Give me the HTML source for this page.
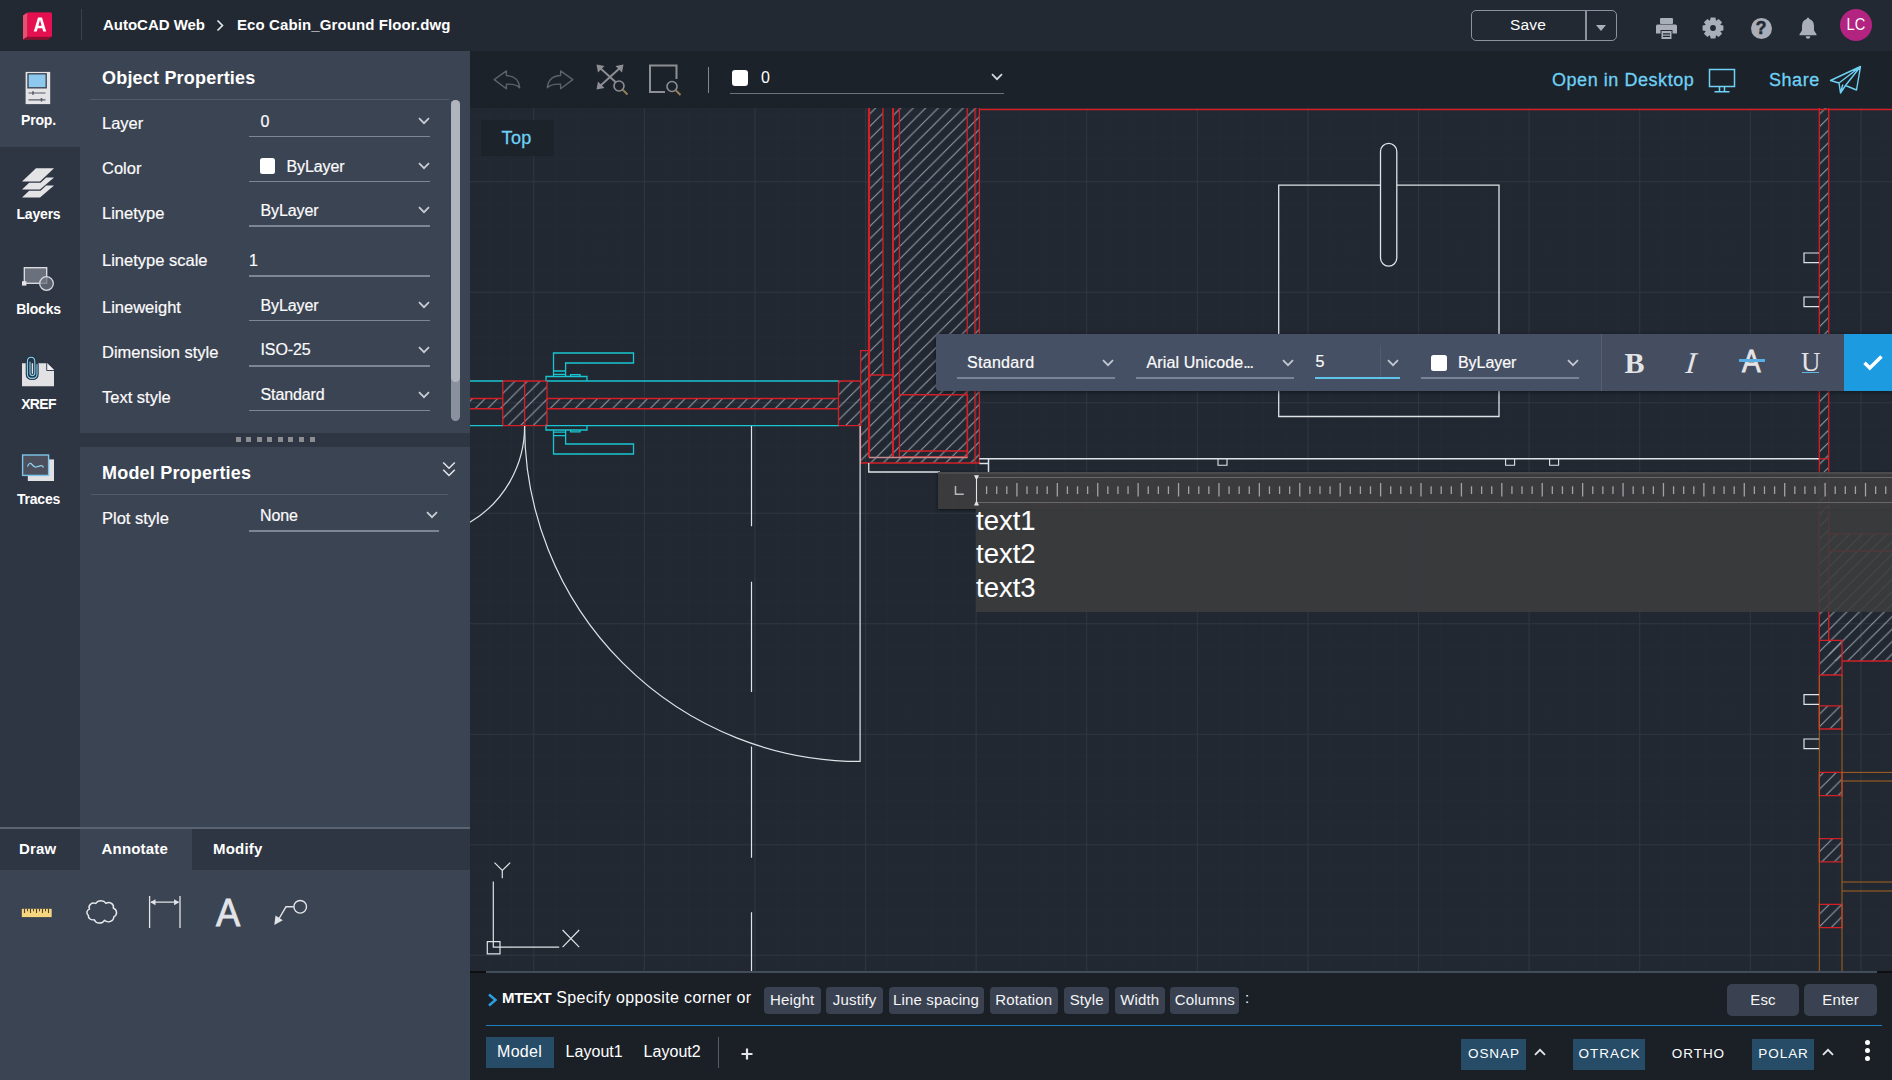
<!DOCTYPE html>
<html><head><meta charset="utf-8">
<style>
*{box-sizing:border-box;margin:0;padding:0}
html,body{width:1892px;height:1080px;overflow:hidden;background:#1b2027;font-family:"Liberation Sans",sans-serif;color:#fff}
.abs{position:absolute}
#topbar{left:0;top:0;width:1892px;height:51px;background:#222933}
#rail{left:0;top:52px;width:80px;height:776px;background:#2e3543;box-shadow:0 -1px 0 #3b4453}
#panel{left:80px;top:52px;width:390px;height:776px;background:#3b4453;box-shadow:0 -1px 0 #3b4453}
#ctool{left:470px;top:52px;width:1422px;height:56px;background:#1c2229;box-shadow:0 -1px 0 #1c2229}
#cmd{left:470px;top:972px;width:1422px;height:108px;background:#1b2027}
#tabs{left:0;top:827px;width:470px;height:253px;background:#3b4453}
.lbl{position:absolute;font-size:16.5px;letter-spacing:0;-webkit-text-stroke:.2px #fbfbfc;color:#fbfbfc;white-space:nowrap;line-height:1}
.val{position:absolute;font-size:16px;letter-spacing:-.1px;-webkit-text-stroke:.2px #fbfbfc;color:#fbfbfc;white-space:nowrap;line-height:1}
.ul{position:absolute;height:1.7px;background:#7d8696}
.chev{position:absolute;width:11px;height:7px}
.rl{position:absolute;left:0;width:77px;text-align:center;font-size:14px;font-weight:bold;letter-spacing:-.2px;color:#fff;line-height:1}
.h{position:absolute;font-size:18px;font-weight:bold;letter-spacing:.2px;color:#fff;line-height:1;white-space:nowrap}
.cb{position:absolute;top:15px;height:26.500px;border-radius:4px;background:#3a4251;font-size:15px;line-height:26.500px;text-align:center;letter-spacing:.15px;white-space:nowrap;color:#f4f5f7}
.sb{position:absolute;top:66.500px;height:31.500px;background:#264c67;font-size:13.500px;line-height:30px;text-align:center;letter-spacing:.95px;text-indent:.9px;white-space:nowrap;color:#fff}
</style></head><body>
<svg class="abs" style="left:470px;top:108px" width="1422" height="864" viewBox="470 108 1422 864" shape-rendering="auto">
<defs>
<pattern id="gmin" x="533.25" y="181.25" width="22.119999999999997" height="22.1" patternUnits="userSpaceOnUse"><path d="M0.5 0V22.1M0 0.5H22.119999999999997" stroke="#232a34" stroke-width="1" fill="none" shape-rendering="crispEdges"/></pattern>
<pattern id="gmaj" x="533.25" y="181.25" width="110.6" height="110.5" patternUnits="userSpaceOnUse"><path d="M0.5 0V110.5M0 0.5H110.6" stroke="#2e3641" stroke-width="1" fill="none" shape-rendering="crispEdges"/></pattern>
<pattern id="hat" x="8.7" y="0" width="12.5" height="12.5" patternUnits="userSpaceOnUse"><path d="M-1 13.5L13.5 -1M-1 1L1 -1M11.5 13.5L13.5 11.5" stroke="#9aa2ad" stroke-width="1" fill="none"/></pattern>
</defs>
<rect x="470" y="108" width="1422" height="864" fill="#212832"/>
<rect x="470" y="108" width="1422" height="864" fill="url(#gmin)"/>
<rect x="470" y="108" width="1422" height="864" fill="url(#gmaj)"/>
<rect x="470" y="398.5" width="32.75" height="10.25" fill="url(#hat)"/>
<rect x="502.75" y="381" width="44.25" height="44.60000000000002" fill="url(#hat)"/>
<rect x="547" y="398.5" width="291.5" height="10.25" fill="url(#hat)"/>
<rect x="838.5" y="381" width="22.100000000000023" height="44.60000000000002" fill="url(#hat)"/>
<rect x="860.6" y="350.6" width="7.399999999999977" height="112.39999999999998" fill="url(#hat)"/>
<rect x="868" y="108" width="15" height="355" fill="url(#hat)"/>
<rect x="883" y="375" width="10" height="88" fill="url(#hat)"/>
<rect x="893" y="108" width="86.39999999999998" height="355" fill="url(#hat)"/>
<rect x="1819.3" y="108" width="9.400000000000091" height="532" fill="url(#hat)"/>
<rect x="1828.7" y="533.8" width="63.299999999999955" height="127.20000000000005" fill="url(#hat)"/>
<rect x="1819.3" y="640.4" width="22.700000000000045" height="34.60000000000002" fill="url(#hat)"/>
<rect x="1819.3" y="705.8" width="22.700000000000045" height="23.200000000000045" fill="url(#hat)"/>
<rect x="1819.3" y="772.4" width="22.700000000000045" height="23.200000000000045" fill="url(#hat)"/>
<rect x="1819.3" y="838.7" width="22.700000000000045" height="23.200000000000045" fill="url(#hat)"/>
<rect x="1819.3" y="904.4" width="22.700000000000045" height="23.200000000000045" fill="url(#hat)"/>
<path d="M470 398.5H502.75M470 408.75H502.75M547 398.5H838.5M547 408.75H838.5" stroke="#d41f26" stroke-width="1.3" fill="none" />
<path d="M502.75 381H547V425.6H502.75ZM524.6 381V425.6" stroke="#d41f26" stroke-width="1.3" fill="none" />
<path d="M838.5 381H860.6V425.6H838.5Z" stroke="#d41f26" stroke-width="1.3" fill="none" />
<path d="M868 350.6H860.6V463H979.4V108" stroke="#d41f26" stroke-width="1.3" fill="none" />
<path d="M869 108V457.5" stroke="#d41f26" stroke-width="2.2" fill="none" />
<path d="M883 108V375H869M883 375H893.5" stroke="#d41f26" stroke-width="1.3" fill="none" />
<path d="M893 108V457.5" stroke="#d41f26" stroke-width="2" fill="none" />
<path d="M899.4 108V457" stroke="#d41f26" stroke-width="1.3" fill="none" />
<path d="M899.4 394.75H967.5V457H899.4M899.4 451H967.5" stroke="#d41f26" stroke-width="1.3" fill="none" />
<path d="M975 108V463M967.2 108V457" stroke="#d41f26" stroke-width="1.3" fill="none" />
<path d="M869 457.5H967.5" stroke="#c98a8e" stroke-width="1.6" fill="none" />
<path d="M979.4 109.5H1892" stroke="#d41f26" stroke-width="1.3" fill="none" />
<path d="M1819.3 108V729M1828.7 108V640.4" stroke="#d41f26" stroke-width="1.3" fill="none" />
<path d="M1819.3 458.75H1828.7" stroke="#d41f26" stroke-width="1.3" fill="none" />
<path d="M1828.7 533.8H1892M1828.7 551H1892" stroke="#d41f26" stroke-width="1.3" fill="none" />
<path d="M1819.3 640.4H1842V675H1819.3M1842 661H1892" stroke="#d41f26" stroke-width="1.3" fill="none" />
<path d="M1819.3 705.8H1842V729.0H1819.3Z" stroke="#d41f26" stroke-width="1.3" fill="none" />
<path d="M1819.3 772.4H1842V795.6H1819.3Z" stroke="#d41f26" stroke-width="1.3" fill="none" />
<path d="M1819.3 838.7H1842V861.9000000000001H1819.3Z" stroke="#d41f26" stroke-width="1.3" fill="none" />
<path d="M1819.3 904.4H1842V927.6H1819.3Z" stroke="#d41f26" stroke-width="1.3" fill="none" />
<path d="M1819.3 675V972M1842 675V972" stroke="#a8621f" stroke-width="1" fill="none" />
<path d="M1842 772.4H1892M1842 781H1892M1842 882H1892M1842 891H1892" stroke="#a8621f" stroke-width="1" fill="none" />
<path d="M470 381H502.75M470 425.6H502.75M547 381H838.5M547 425.6H838.5" stroke="#19c5d2" stroke-width="1.4" fill="none" />
<path d="M553.5 376.5V353H633.5V363H565.6V376.5M553.5 371H565.6M553.5 374.4H565.6" stroke="#19c5d2" stroke-width="1.3" fill="none" />
<path d="M546 381V376.5H587V381M570.6 376.5V374.7H580V376.5" stroke="#19c5d2" stroke-width="1.3" fill="none" />
<path d="M553.5 430V454H633.5V444H565.6V430M553.5 435.6H565.6M553.5 432.2H565.6" stroke="#19c5d2" stroke-width="1.3" fill="none" />
<path d="M546 425.6V430H587V425.6M570.6 430V431.8H580V430" stroke="#19c5d2" stroke-width="1.3" fill="none" />
<path d="M524.6 426A335.5 335.5 0 0 0 860.1 761.4V426" stroke="#dfe3e8" stroke-width="1.2" fill="none" />
<path d="M524.6 426A111.7 111.7 0 0 1 470 522.3" stroke="#dfe3e8" stroke-width="1.2" fill="none" />
<path d="M751.5 426V526.2M751.5 581.7V692M751.5 746.4V857.8M751.5 912.2V972" stroke="#dfe3e8" stroke-width="1.2" fill="none" />
<path d="M868.75 463V472H940" stroke="#dfe3e8" stroke-width="1.3" fill="none" />
<path d="M979.4 458.75H1818.8M979.4 463.5H988.5M988.5 458.75V472" stroke="#dfe3e8" stroke-width="1.5" fill="none" />
<path d="M1278.7 185.2H1499V416.5H1278.7Z" stroke="#dfe3e8" stroke-width="1.3" fill="none" />
<rect x="1380.5" y="143.4" width="16.3" height="122.8" rx="8.15" fill="#212832" stroke="#dfe3e8" stroke-width="1.3"/>
<path d="M1218 458.75V465.2H1227V458.75" stroke="#dfe3e8" stroke-width="1.1" fill="none" />
<path d="M1505.6 458.75V465.2H1514.6V458.75" stroke="#dfe3e8" stroke-width="1.1" fill="none" />
<path d="M1549.6 458.75V465.2H1558.6V458.75" stroke="#dfe3e8" stroke-width="1.1" fill="none" />
<path d="M1819 253H1804V262.7H1819" stroke="#dfe3e8" stroke-width="1.2" fill="none" />
<path d="M1819 297H1804V306.7H1819" stroke="#dfe3e8" stroke-width="1.2" fill="none" />
<path d="M1819 694.7H1804V704.4000000000001H1819" stroke="#dfe3e8" stroke-width="1.2" fill="none" />
<path d="M1819 739H1804V748.7H1819" stroke="#dfe3e8" stroke-width="1.2" fill="none" />
<path d="M493.3 881.6V947.2H559.2" stroke="#dfe3e8" stroke-width="1.2" fill="none" />
<path d="M487.3 941.6H500V953.9H487.3Z" stroke="#dfe3e8" stroke-width="1.2" fill="none" />
<path d="M494.5 862.6L502.3 870.5L510.2 862.6M502.3 870.5V878.3" stroke="#dfe3e8" stroke-width="1.2" fill="none" />
<path d="M562.6 930L579.2 947.2M579.2 930L562.6 947.2" stroke="#dfe3e8" stroke-width="1.2" fill="none" />
</svg>
<div id="topbar" class="abs">
 <!-- logo -->
 <svg class="abs" style="left:21px;top:10px" width="34" height="32" viewBox="0 0 34 32">
  <path d="M2 5.5L6.5 2.5H30.5V26.5L27 29.5H2Z" fill="#a5123a"/>
  <path d="M2 5.5L6.5 2.5V27L2 29.5Z" fill="#e8506f"/>
  <path d="M6.5 26.5H30.5L27.5 29.5H2Z" fill="#8c0f30"/>
  <rect x="6.500" y="2.500" width="24.500" height="24.300" rx="1.500" fill="#e51050"/>
  <path d="M12.800 21.500L17 7.500H21L25.200 21.500H22.200L21.300 18.300H16.700L15.800 21.500ZM17.400 15.800H20.600L19 10Z" fill="#fff"/>
 </svg>
 <div class="abs" style="left:81px;top:9px;width:1px;height:31px;background:#3a4250"></div>
 <div class="abs" style="left:103px;top:16px;font-size:15px;font-weight:bold;letter-spacing:-.02px;line-height:18px;white-space:nowrap">AutoCAD Web</div>
 <svg class="abs" style="left:216px;top:19px" width="8" height="13" viewBox="0 0 8 13"><path d="M1.5 1.5L6.5 6.5L1.5 11.5" stroke="#e8eaee" stroke-width="1.6" fill="none"/></svg>
 <div class="abs" style="left:237px;top:16px;font-size:15px;font-weight:bold;letter-spacing:.1px;line-height:18px;white-space:nowrap">Eco Cabin_Ground Floor.dwg</div>
 <!-- save -->
 <div class="abs" style="left:1471px;top:10px;width:146px;height:31px;border:1.5px solid #8b93a1;border-radius:5px"></div>
 <div class="abs" style="left:1585px;top:11px;width:1.5px;height:29px;background:#8b93a1"></div>
 <div class="abs" style="left:1471px;top:16px;width:114px;text-align:center;font-size:15.5px;letter-spacing:.2px;line-height:18px">Save</div>
 <svg class="abs" style="left:1596px;top:25px" width="10" height="6" viewBox="0 0 10 6"><path d="M0 0H10L5 6Z" fill="#aab0bb"/></svg>
 <!-- printer -->
 <svg class="abs" style="left:1655px;top:17px" width="23" height="23" viewBox="0 0 23 23" fill="#a9aeb9">
  <rect x="5" y="1" width="13" height="6" rx="1"/>
  <path d="M2.5 7.5H20.5Q22 7.5 22 9V16.5H17.5V13H5.5V16.5H1V9Q1 7.5 2.5 7.5Z"/>
  <path d="M6.5 14H16.5V22H6.5Z M8 16.2H15V17.4H8ZM8 18.8H15V20H8Z" fill-rule="evenodd"/>
 </svg>
 <!-- gear -->
 <svg class="abs" style="left:1702px;top:17px" width="22" height="22" viewBox="-11 -11 22 22">
  <g fill="#a9aeb9"><circle r="7.700"/>
  <path d="M-2.400 -10.400H2.400L3.300 -6H-3.300Z"/><path d="M-2.400 -10.400H2.400L3.300 -6H-3.300Z" transform="rotate(45)"/><path d="M-2.400 -10.400H2.400L3.300 -6H-3.300Z" transform="rotate(90)"/><path d="M-2.400 -10.400H2.400L3.300 -6H-3.300Z" transform="rotate(135)"/><path d="M-2.400 -10.400H2.400L3.300 -6H-3.300Z" transform="rotate(180)"/><path d="M-2.400 -10.400H2.400L3.300 -6H-3.300Z" transform="rotate(225)"/><path d="M-2.400 -10.400H2.400L3.300 -6H-3.300Z" transform="rotate(270)"/><path d="M-2.400 -10.400H2.400L3.300 -6H-3.300Z" transform="rotate(315)"/></g>
  <circle r="2.900" fill="#222933"/>
 </svg>
 <!-- help -->
 <div class="abs" style="left:1750.500px;top:17.500px;width:21px;height:21px;border-radius:10.500px;background:#a9aeb9;color:#222933;font-weight:bold;font-size:17.500px;line-height:21.500px;text-align:center;-webkit-text-stroke:.5px #222933">?</div>
 <!-- bell -->
 <svg class="abs" style="left:1798px;top:16px" width="20" height="24" viewBox="0 0 20 24" fill="#a9aeb9">
  <path d="M10 1.5Q11.3 1.5 11.3 3Q16 4.3 16 10V14.5L18.5 18.3V19.3H1.5V18.3L4 14.5V10Q4 4.3 8.7 3Q8.7 1.5 10 1.5Z"/>
  <path d="M7.7 20.3H12.3Q12.3 22.8 10 22.8Q7.7 22.8 7.7 20.3Z"/>
 </svg>
 <!-- avatar -->
 <div class="abs" style="left:1839.5px;top:9px;width:32px;height:32px;border-radius:16px;background:#b32380;font-size:17px;line-height:32.500px;text-align:center;letter-spacing:0"><span style="display:inline-block;transform:scaleX(.86)">LC</span></div>
</div>

<div id="rail" class="abs">
 <div class="abs" style="left:0;top:0;width:80px;height:94.5px;background:#3b4453"></div>
 <!-- prop icon -->
 <svg class="abs" style="left:25px;top:19px" width="26" height="34" viewBox="0 0 26 34">
  <rect x=".6" y=".9" width="24.6" height="32.2" fill="#e4e4e6"/>
  <rect x="3" y="2.8" width="18.2" height="14" fill="#8dc8ee" stroke="#3e4654" stroke-width="1.4"/>
  <path d="M3.5 22H20.5M3.5 28.8H20.5" stroke="#555b66" stroke-width="1.2"/>
  <path d="M8 20.2V23.8M16.5 27V30.6" stroke="#555b66" stroke-width="1.6"/>
 </svg>
 <div class="rl" style="top:60.5px">Prop.</div>
 <!-- layers -->
 <svg class="abs" style="left:21px;top:115px" width="34" height="32" viewBox="0 0 34 32" fill="#e4e4e6">
  <path d="M1 14.6L15 1.2H33L19 14.6Z"/>
  <path d="M1 22.6L8.2 15.8H19.6L25.2 10.4H33L19 22.6Z"/>
  <path d="M1 30.6L8.2 23.8H19.6L25.2 18.4H33L19 30.6Z"/>
 </svg>
 <div class="rl" style="top:155px">Layers</div>
 <!-- blocks -->
 <svg class="abs" style="left:20px;top:213px" width="36" height="28" viewBox="0 0 36 28">
  <rect x="4.3" y="2.7" width="22.4" height="15.6" fill="#6b707d" stroke="#e0e2e6" stroke-width="1.3"/>
  <circle cx="26.5" cy="18.5" r="6.8" fill="#6b707d" fill-opacity=".75" stroke="#d6d8dc" stroke-width="1.3"/>
  <rect x="2" y="16.2" width="4.4" height="4.4" fill="#e4e4e6"/>
 </svg>
 <div class="rl" style="top:249.5px">Blocks</div>
 <!-- xref -->
 <svg class="abs" style="left:21px;top:304px" width="34" height="32" viewBox="0 0 34 32">
  <path d="M1 7.200H26.200L33 14V30.200H1Z" fill="#e2e2e4"/>
  <path d="M26.200 7.200V14H33Z" fill="#f1f1f3"/>
  <path d="M25.700 7.200V14.500H33" fill="none" stroke="#3a4150" stroke-width="1"/>
  <path d="M9 6V17Q9 19.600 11.400 19.600Q13.800 19.600 13.800 17V5.500Q13.800 1.200 10.100 1.200Q6.400 1.200 6.400 5.500V18Q6.400 22.400 11.200 22.400Q16 22.400 16 18V8.500" fill="none" stroke="#1f3646" stroke-width="3.400" stroke-linecap="round"/>
  <path d="M9 6V17Q9 19.600 11.400 19.600Q13.800 19.600 13.800 17V5.500Q13.800 1.200 10.100 1.200Q6.400 1.200 6.400 5.500V18Q6.400 22.400 11.200 22.400Q16 22.400 16 18V8.500" fill="none" stroke="#8fd0ec" stroke-width="1.100" stroke-linecap="round"/>
 </svg>
 <div class="rl" style="top:344.5px;letter-spacing:-.7px">XREF</div>
 <!-- traces -->
 <svg class="abs" style="left:21px;top:401px" width="34" height="30" viewBox="0 0 34 30">
  <rect x="6.8" y="6.4" width="26.2" height="21.6" fill="#e2e2e4"/>
  <rect x="1.6" y="2" width="26" height="20.4" fill="#4b505c" stroke="#7cc4ec" stroke-width="1.4"/>
  <path d="M6.5 13.5Q8.5 8.5 11 11.5T15 14T19 12.8T22.5 14.5" fill="none" stroke="#8fd0f2" stroke-width="1.3"/>
 </svg>
 <div class="rl" style="top:439.5px">Traces</div>
</div>

<div id="panel" class="abs">
<div class="h" style="left:22px;top:17px">Object Properties</div>
<div class="abs" style="left:10px;top:47px;width:359px;height:1px;background:#525b6b"></div>
<div class="abs" style="left:371px;top:48px;width:9px;height:321px;border-radius:4.5px;background:#8a909d"></div>
<div class="abs" style="left:371px;top:48px;width:9px;height:282px;border-radius:4.5px;background:#b0b4bd"></div>
<div class="lbl" style="left:22px;top:62.9px">Layer</div>
<div class="val" style="left:180.5px;top:61.8px">0</div>
<div class="ul" style="left:169px;top:83.6px;width:181px"></div>
<svg class="abs" style="left:337.5px;top:65.39999999999999px" width="12" height="8" viewBox="0 0 12 8"><path d="M1 1.2L6 6.2L11 1.2" stroke="#c9ced6" stroke-width="1.7" fill="none"/></svg>
<div class="lbl" style="left:22px;top:108.3px">Color</div>
<div class="abs" style="left:179.5px;top:106.3px;width:15.5px;height:15.5px;border-radius:2.5px;background:#fff"></div>
<div class="val" style="left:206.5px;top:106.5px">ByLayer</div>
<div class="ul" style="left:169px;top:128.6px;width:181px"></div>
<svg class="abs" style="left:337.5px;top:109.6px" width="12" height="8" viewBox="0 0 12 8"><path d="M1 1.2L6 6.2L11 1.2" stroke="#c9ced6" stroke-width="1.7" fill="none"/></svg>
<div class="lbl" style="left:22px;top:152.6px">Linetype</div>
<div class="val" style="left:180.5px;top:151.4px">ByLayer</div>
<div class="ul" style="left:169px;top:173.0px;width:181px"></div>
<svg class="abs" style="left:337.5px;top:154.4px" width="12" height="8" viewBox="0 0 12 8"><path d="M1 1.2L6 6.2L11 1.2" stroke="#c9ced6" stroke-width="1.7" fill="none"/></svg>
<div class="lbl" style="left:22px;top:199.9px">Linetype scale</div>
<div class="val" style="left:169px;top:200.8px">1</div>
<div class="ul" style="left:169px;top:223.2px;width:181px"></div>
<div class="lbl" style="left:22px;top:247.2px">Lineweight</div>
<div class="val" style="left:180.5px;top:246.0px">ByLayer</div>
<div class="ul" style="left:169px;top:267.5px;width:181px"></div>
<svg class="abs" style="left:337.5px;top:249.20000000000002px" width="12" height="8" viewBox="0 0 12 8"><path d="M1 1.2L6 6.2L11 1.2" stroke="#c9ced6" stroke-width="1.7" fill="none"/></svg>
<div class="lbl" style="left:22px;top:292.1px">Dimension style</div>
<div class="val" style="left:180.5px;top:290.4px">ISO-25</div>
<div class="ul" style="left:169px;top:312.9px;width:181px"></div>
<svg class="abs" style="left:337.5px;top:294.0px" width="12" height="8" viewBox="0 0 12 8"><path d="M1 1.2L6 6.2L11 1.2" stroke="#c9ced6" stroke-width="1.7" fill="none"/></svg>
<div class="lbl" style="left:22px;top:336.9px">Text style</div>
<div class="val" style="left:180.5px;top:335.3px">Standard</div>
<div class="ul" style="left:169px;top:357.6px;width:181px"></div>
<svg class="abs" style="left:337.5px;top:338.90000000000003px" width="12" height="8" viewBox="0 0 12 8"><path d="M1 1.2L6 6.2L11 1.2" stroke="#c9ced6" stroke-width="1.7" fill="none"/></svg>
<div class="abs" style="left:0;top:381px;width:390px;height:13.5px;background:#2e3543"></div>
<div class="abs" style="left:155.7px;top:385px;width:5px;height:5px;background:#8b8d91"></div>
<div class="abs" style="left:166.2px;top:385px;width:5px;height:5px;background:#8b8d91"></div>
<div class="abs" style="left:176.8px;top:385px;width:5px;height:5px;background:#8b8d91"></div>
<div class="abs" style="left:187.3px;top:385px;width:5px;height:5px;background:#8b8d91"></div>
<div class="abs" style="left:197.9px;top:385px;width:5px;height:5px;background:#8b8d91"></div>
<div class="abs" style="left:208.4px;top:385px;width:5px;height:5px;background:#8b8d91"></div>
<div class="abs" style="left:219.0px;top:385px;width:5px;height:5px;background:#8b8d91"></div>
<div class="abs" style="left:229.6px;top:385px;width:5px;height:5px;background:#8b8d91"></div>
<div class="h" style="left:22px;top:411.5px">Model Properties</div>
<svg class="abs" style="left:362px;top:408.5px" width="14" height="17" viewBox="0 0 14 17"><path d="M1.2 1.5L7 7.2L12.8 1.5M1.2 8.8L7 14.5L12.8 8.8" stroke="#e4e6ea" stroke-width="1.5" fill="none"/></svg>
<div class="abs" style="left:11px;top:442px;width:357px;height:1px;background:#525b6b"></div>
<div class="lbl" style="left:22px;top:457.9px">Plot style</div>
<div class="val" style="left:180px;top:456.4px">None</div>
<div class="ul" style="left:168.7px;top:478.3px;width:190.5px"></div>
<svg class="abs" style="left:346px;top:458.79999999999995px" width="12" height="8" viewBox="0 0 12 8"><path d="M1 1.2L6 6.2L11 1.2" stroke="#c9ced6" stroke-width="1.7" fill="none"/></svg>
</div>
<div id="tabs" class="abs">
 <div class="abs" style="left:0;top:0;width:470px;height:1.5px;background:#5a6372"></div>
 <div class="abs" style="left:0;top:1.5px;width:470px;height:41px;background:#2e3543"></div>
 <div class="abs" style="left:80px;top:1.5px;width:112px;height:41px;background:#3b4453"></div>
 <div class="abs" style="left:19px;top:12.5px;font-size:15px;font-weight:bold;letter-spacing:.2px;line-height:18px">Draw</div>
 <div class="abs" style="left:101.5px;top:12.5px;font-size:15px;font-weight:bold;letter-spacing:.2px;line-height:18px">Annotate</div>
 <div class="abs" style="left:213px;top:12.5px;font-size:15px;font-weight:bold;letter-spacing:.2px;line-height:18px">Modify</div>
 <!-- ruler icon -->
 <svg class="abs" style="left:20.700px;top:79.700px" width="32" height="12" viewBox="0 0 32 12"><rect x=".5" y="1.500" width="30.500" height="8.800" fill="#f7d67f" stroke="#3a3f49" stroke-width=".6"/><path d="M3.500 1.500V6M9.500 1.500V6M15.500 1.500V6M21.500 1.500V6M27.500 1.500V6" stroke="#4a4435" stroke-width="1.100"/><path d="M6.500 1.500V4.300M12.500 1.500V4.300M18.500 1.500V4.300M24.500 1.500V4.300" stroke="#4a4435" stroke-width="1"/></svg>
 <!-- cloud -->
 <svg class="abs" style="left:83.500px;top:73px" width="35" height="24" viewBox="0 0 35 26" preserveAspectRatio="none"><path d="M5.500 9.800A4.600 4.600 0 0 1 11.800 3.800A6 6 0 0 1 22 3.600A4.800 4.800 0 0 1 29.300 8.800A5.200 5.200 0 0 1 29.800 18.200A5.400 5.400 0 0 1 20.500 22A5.600 5.600 0 0 1 10.300 21.300A4.600 4.600 0 0 1 4.300 16.500A3.900 3.900 0 0 1 5.500 9.800Z" fill="none" stroke="#e6e8ec" stroke-width="1.500" stroke-linejoin="round"/></svg>
 <!-- dimension -->
 <svg class="abs" style="left:148px;top:68px" width="34" height="34" viewBox="0 0 34 34"><path d="M1.600 1V33M32 1V33M3 7.200H30.500" fill="none" stroke="#e2e4e8" stroke-width="1.300"/><path d="M2.300 7.200L7.500 4.200V10.200ZM31.300 7.200L26.100 4.200V10.200Z" fill="#e2e4e8"/></svg>
 <!-- A -->
 <div class="abs" style="left:214.5px;top:63px;font-size:39px;line-height:46px;color:#e2e4e8;transform:scaleX(.93);transform-origin:50% 50%;-webkit-text-stroke:.85px #e2e4e8">A</div>
 <!-- leader -->
 <svg class="abs" style="left:272px;top:71px" width="38" height="28" viewBox="0 0 38 28"><circle cx="28.200" cy="8.800" r="6.300" fill="none" stroke="#e2e4e8" stroke-width="1.400"/><path d="M21.900 8.800H14L6.500 21.500" fill="none" stroke="#e2e4e8" stroke-width="1.400"/><path d="M2.300 27L3.500 17.500L10.800 22.200Z" fill="#e2e4e8"/></svg>
</div>

<div id="ctool" class="abs">
 <!-- undo/redo (coords relative to 470,52) -->
 <svg class="abs" style="left:23px;top:17px" width="30" height="22" viewBox="0 0 30 22"><path d="M1.200 10.600L13.400 1.900V6.500Q25.500 7 26.700 18.700Q22.500 14.600 13.400 15.200V19.700Z" fill="none" stroke="#5b626d" stroke-width="1.400" stroke-linejoin="round"/></svg>
 <svg class="abs" style="left:73.700px;top:17px" width="30" height="22" viewBox="0 0 30 22"><path d="M28.800 10.600L16.600 1.900V6.500Q4.500 7 3.300 18.700Q7.500 14.600 16.600 15.200V19.700Z" fill="none" stroke="#5b626d" stroke-width="1.400" stroke-linejoin="round"/></svg>
 <!-- zoom extents -->
 <svg class="abs" style="left:125px;top:11px" width="36" height="34" viewBox="0 0 36 34">
  <path d="M4 4L26 24M26 4L4 24" stroke="#8d8f94" stroke-width="1.900" fill="none"/>
  <path d="M1.500 1.500L9.500 3L3 9.500ZM28.500 1.500L20.500 3L27 9.500ZM1.500 26.500L9.500 25L3 18.500Z" fill="#8d8f94"/>
  <circle cx="24" cy="23" r="5" fill="#1c2229" stroke="#8d8f94" stroke-width="1.600"/>
  <path d="M27.600 26.600L32.500 31.500" stroke="#96805a" stroke-width="2" fill="none"/>
 </svg>
 <!-- zoom window -->
 <svg class="abs" style="left:178px;top:11px" width="36" height="34" viewBox="0 0 36 34">
  <path d="M17 29H2V2.500H28.500V16" stroke="#8d8f94" stroke-width="2" fill="none"/>
  <circle cx="24" cy="23.500" r="5" fill="#1c2229" stroke="#8d8f94" stroke-width="1.600"/>
  <path d="M27.600 27.100L32.500 32" stroke="#96805a" stroke-width="2" fill="none"/>
 </svg>
 <div class="abs" style="left:237.500px;top:15px;width:1.300px;height:26px;background:#85888d"></div>
 <div class="abs" style="left:262px;top:17.500px;width:16px;height:16px;border-radius:3px;background:#fff"></div>
 <div class="abs" style="left:291px;top:17px;font-size:16px;line-height:18px">0</div>
 <svg class="abs" style="left:521px;top:21px" width="12" height="8" viewBox="0 0 12 8"><path d="M1 1.200L6 6.200L11 1.200" stroke="#d6d9de" stroke-width="1.700" fill="none"/></svg>
 <div class="abs" style="left:260px;top:40.500px;width:274px;height:1.500px;background:#6b7381"></div>
 <!-- right -->
 <div class="abs" style="left:1082px;top:18px;font-size:18px;letter-spacing:.55px;line-height:20px;color:#6fd1f5;white-space:nowrap;-webkit-text-stroke:.3px #6fd1f5">Open in Desktop</div>
 <svg class="abs" style="left:1238px;top:16px" width="28" height="26" viewBox="0 0 28 26"><path d="M1.500 1.500H26.500V18.500H1.500ZM11.500 18.500V23.500M16.500 18.500V23.500M6.500 23.800H21.500" fill="none" stroke="#6fd1f5" stroke-width="1.500"/></svg>
 <div class="abs" style="left:1299px;top:18px;font-size:18px;letter-spacing:.55px;line-height:20px;color:#6fd1f5;white-space:nowrap;-webkit-text-stroke:.3px #6fd1f5">Share</div>
 <svg class="abs" style="left:1359px;top:13px" width="34" height="30" viewBox="0 0 34 30"><path d="M1.500 15.500L31.500 1.500L27.500 25L16.500 20.500L11.500 28L10 18ZM10 18L31.500 1.500L16.500 20.500M11.500 28L13.800 19.500" fill="none" stroke="#6fd1f5" stroke-width="1.400" stroke-linejoin="round"/></svg>
</div>

<div class="abs" style="left:481px;top:120px;width:73px;height:35.500px;background:#1d232b"></div>
<div class="abs" style="left:501.500px;top:127px;font-size:18px;line-height:22px;color:#6fd1f5;letter-spacing:.4px;-webkit-text-stroke:.3px #6fd1f5">Top</div>
<div class="abs" style="left:935.500px;top:333.500px;width:956.500px;height:57.500px;background:#465064;border-radius:4px 0 0 4px;box-shadow:0 1px 4px rgba(0,0,0,.45)"></div>
<div class="abs" style="left:1600.500px;top:333.500px;width:243px;height:57.500px;background:#454e61;border-left:1px solid #566074"></div>
<div class="abs" style="left:1843.500px;top:333.500px;width:48.500px;height:57.500px;background:#1c9be0"></div>
<div class="abs" style="left:967px;top:353.500px;font-size:16px;line-height:18px;letter-spacing:.3px;color:#fbfbfc;white-space:nowrap;-webkit-text-stroke:.2px #fbfbfc">Standard</div>
<div class="abs" style="left:957px;top:377px;width:158px;height:1.600px;background:#7a8497"></div>
<svg class="abs" style="left:1102px;top:358.5px" width="12" height="8" viewBox="0 0 12 8"><path d="M1 1.200L6 6.200L11 1.200" stroke="#c3c9d2" stroke-width="1.700" fill="none"/></svg>
<div class="abs" style="left:1146.500px;top:353.500px;font-size:16px;line-height:18px;letter-spacing:.3px;color:#fbfbfc;white-space:nowrap;-webkit-text-stroke:.2px #fbfbfc;letter-spacing:.12px">Arial Unicode<span style="letter-spacing:-1.3px">...</span></div>
<div class="abs" style="left:1136px;top:377px;width:158px;height:1.600px;background:#7a8497"></div>
<svg class="abs" style="left:1281.5px;top:358.5px" width="12" height="8" viewBox="0 0 12 8"><path d="M1 1.200L6 6.200L11 1.200" stroke="#c3c9d2" stroke-width="1.700" fill="none"/></svg>
<div class="abs" style="left:1315.500px;top:352.500px;font-size:16px;line-height:18px;letter-spacing:.3px;color:#fbfbfc;white-space:nowrap;-webkit-text-stroke:.2px #fbfbfc">5</div>
<div class="abs" style="left:1315px;top:376.500px;width:85px;height:2px;background:#5fc3ea"></div>
<div class="abs" style="left:1379.500px;top:345px;width:1px;height:32px;background:#525c6f"></div>
<svg class="abs" style="left:1387px;top:358.5px" width="12" height="8" viewBox="0 0 12 8"><path d="M1 1.200L6 6.200L11 1.200" stroke="#c3c9d2" stroke-width="1.700" fill="none"/></svg>
<div class="abs" style="left:1431px;top:354.500px;width:16px;height:16px;border-radius:2.500px;background:#fff"></div>
<div class="abs" style="left:1458px;top:353.500px;font-size:16px;line-height:18px;letter-spacing:.3px;color:#fbfbfc;white-space:nowrap;-webkit-text-stroke:.2px #fbfbfc;letter-spacing:-.05px">ByLayer</div>
<div class="abs" style="left:1421px;top:377px;width:158px;height:1.600px;background:#7a8497"></div>
<svg class="abs" style="left:1566.5px;top:358.5px" width="12" height="8" viewBox="0 0 12 8"><path d="M1 1.200L6 6.200L11 1.200" stroke="#c3c9d2" stroke-width="1.700" fill="none"/></svg>
<div class="abs" style="left:1624.500px;top:345px;font-family:'Liberation Serif',serif;font-weight:bold;font-size:30px;line-height:36px;color:#e3e4e6">B</div>
<div class="abs" style="left:1686px;top:345px;font-family:'Liberation Serif',serif;font-style:italic;font-size:30px;transform:skewX(-6deg);line-height:36px;color:#e3e4e6">I</div>
<div class="abs" style="left:1741px;top:343.500px;font-size:31px;line-height:36px;color:#e3e4e6;font-weight:normal;transform:scaleX(.9);-webkit-text-stroke:.8px #e3e4e6">A</div>
<div class="abs" style="left:1739px;top:359.300px;width:25.500px;height:2.300px;background:#58aee2"></div>
<div class="abs" style="left:1801px;top:346px;font-family:'Liberation Serif',serif;font-size:27px;line-height:32px;color:#e3e4e6">U</div>
<div class="abs" style="left:1802px;top:371.500px;width:16.500px;height:1.600px;background:#62b7e6"></div>
<svg class="abs" style="left:1861px;top:353px" width="24" height="19" viewBox="0 0 24 19"><path d="M3.500 9.800L8.800 15L20.500 3.600" stroke="#fff" stroke-width="3.500" fill="none"/></svg>
<div class="abs" style="left:937.500px;top:472px;width:954.500px;height:37px;background:rgba(61,61,63,.93);box-shadow:0 1px 3px rgba(0,0,0,.5)"></div>
<div class="abs" style="left:937.500px;top:472px;width:954.500px;height:1.500px;background:#4b4b4d"></div>
<div class="abs" style="left:976.500px;top:477px;width:915.500px;height:1.200px;background:#68686a"></div>
<div class="abs" style="left:976.500px;top:502px;width:915.500px;height:1.200px;background:#68686a"></div>
<svg class="abs" style="left:0;top:0" width="1892" height="520" viewBox="0 0 1892 520"><path d="M986.60 486.300V494M996.71 486.300V494M1006.81 486.300V494M1016.91 483V496.500M1027.01 486.300V494M1037.12 486.300V494M1047.22 486.300V494M1057.32 483V496.500M1067.42 486.300V494M1077.53 486.300V494M1087.63 486.300V494M1097.73 483V496.500M1107.83 486.300V494M1117.93 486.300V494M1128.04 486.300V494M1138.14 483V496.500M1148.24 486.300V494M1158.35 486.300V494M1168.45 486.300V494M1178.55 483V496.500M1188.65 486.300V494M1198.76 486.300V494M1208.86 486.300V494M1218.96 483V496.500M1229.06 486.300V494M1239.16 486.300V494M1249.27 486.300V494M1259.37 483V496.500M1269.47 486.300V494M1279.58 486.300V494M1289.68 486.300V494M1299.78 483V496.500M1309.88 486.300V494M1319.98 486.300V494M1330.09 486.300V494M1340.19 483V496.500M1350.29 486.300V494M1360.39 486.300V494M1370.50 486.300V494M1380.60 483V496.500M1390.70 486.300V494M1400.80 486.300V494M1410.91 486.300V494M1421.01 483V496.500M1431.11 486.300V494M1441.21 486.300V494M1451.32 486.300V494M1461.42 483V496.500M1471.52 486.300V494M1481.62 486.300V494M1491.73 486.300V494M1501.83 483V496.500M1511.93 486.300V494M1522.03 486.300V494M1532.14 486.300V494M1542.24 483V496.500M1552.34 486.300V494M1562.44 486.300V494M1572.55 486.300V494M1582.65 483V496.500M1592.75 486.300V494M1602.86 486.300V494M1612.96 486.300V494M1623.06 483V496.500M1633.16 486.300V494M1643.26 486.300V494M1653.37 486.300V494M1663.47 483V496.500M1673.57 486.300V494M1683.67 486.300V494M1693.78 486.300V494M1703.88 483V496.500M1713.98 486.300V494M1724.09 486.300V494M1734.19 486.300V494M1744.29 483V496.500M1754.39 486.300V494M1764.49 486.300V494M1774.60 486.300V494M1784.70 483V496.500M1794.80 486.300V494M1804.90 486.300V494M1815.01 486.300V494M1825.11 483V496.500M1835.21 486.300V494M1845.32 486.300V494M1855.42 486.300V494M1865.52 483V496.500M1875.62 486.300V494M1885.72 486.300V494" stroke="#a2a2a4" stroke-width="1.300" fill="none"/><path d="M955.500 486V494.200H963.800" stroke="#b8b8ba" stroke-width="1.500" fill="none"/><path d="M976.500 476V505" stroke="#e4e4e6" stroke-width="1.100"/><path d="M974 475.300H979L976.500 480.500ZM974 505.500H979L976.500 500.300Z" fill="#e4e4e6"/></svg>
<div class="abs" style="left:975.500px;top:509px;width:916.500px;height:103px;background:rgba(60,60,62,.88)"></div>
<div class="abs" style="left:976px;top:506.2px;font-size:27.500px;line-height:30px;color:#fff;-webkit-text-stroke:.1px #fff">text1</div>
<div class="abs" style="left:976px;top:539.4px;font-size:27.500px;line-height:30px;color:#fff;-webkit-text-stroke:.1px #fff">text2</div>
<div class="abs" style="left:976px;top:572.6px;font-size:27.500px;line-height:30px;color:#fff;-webkit-text-stroke:.1px #fff">text3</div>
<div id="cmd" class="abs">
 <div class="abs" style="left:0;top:-1.500px;width:16px;height:2px;background:#0d0f12"></div>
 <div class="abs" style="left:16px;top:-1.500px;width:1391px;height:2.300px;background:#434c5a"></div>
 <div class="abs" style="left:1407px;top:-1.500px;width:15px;height:2.300px;background:#0d0f12"></div>
 <svg class="abs" style="left:16.500px;top:21px" width="11" height="14" viewBox="0 0 11 14"><path d="M2 1.500L8.500 7L2 12.500" stroke="#2e9fe2" stroke-width="2.400" fill="none"/></svg>
 <div class="abs" style="left:32px;top:17px;font-size:16px;line-height:18px;white-space:nowrap;letter-spacing:.36px"><b style="letter-spacing:-.3px;font-size:15px">MTEXT</b> Specify opposite corner or</div>
 <div class="cb" style="left:294px;width:56.500px">Height</div>
 <div class="cb" style="left:356.300px;width:56.700px">Justify</div>
 <div class="cb" style="left:418.600px;width:95px">Line spacing</div>
 <div class="cb" style="left:519.500px;width:68.500px">Rotation</div>
 <div class="cb" style="left:594px;width:45.400px">Style</div>
 <div class="cb" style="left:644.600px;width:50.400px">Width</div>
 <div class="cb" style="left:700.200px;width:69.300px">Columns</div>
 <div class="abs" style="left:775px;top:17px;font-size:15px;line-height:18px">:</div>
 <div class="cb" style="left:1257px;width:72px;top:12px;height:32px;line-height:32px;font-size:15px;border-radius:5px">Esc</div>
 <div class="cb" style="left:1334.300px;width:72.700px;top:12px;height:32px;line-height:32px;font-size:15px;border-radius:5px">Enter</div>
 <div class="abs" style="left:16px;top:52.500px;width:1396px;height:1.500px;background:#1c80bb"></div>
 <!-- layout tabs -->
 <div class="abs" style="left:16px;top:64.500px;width:68px;height:31.500px;background:#264c67"></div>
 <div class="abs" style="left:27px;top:71px;font-size:16px;line-height:18px;letter-spacing:.3px">Model</div>
 <div class="abs" style="left:95.500px;top:71px;font-size:16px;line-height:18px;letter-spacing:.05px">Layout1</div>
 <div class="abs" style="left:173.500px;top:71px;font-size:16px;line-height:18px;letter-spacing:.05px">Layout2</div>
 <div class="abs" style="left:247.800px;top:64.500px;width:1.300px;height:31.500px;background:#555c68"></div>
 <svg class="abs" style="left:271px;top:75.500px" width="12" height="12" viewBox="0 0 12 12"><path d="M6 .5V11.500M.5 6H11.500" stroke="#e4e6ea" stroke-width="2.200"/></svg>
 <!-- status -->
 <div class="sb" style="left:991px;width:65px">OSNAP</div>
 <svg class="abs" style="left:1064px;top:76px" width="12" height="8" viewBox="0 0 12 8"><path d="M1 6.800L6 1.800L11 6.800" stroke="#e4e6ea" stroke-width="1.800" fill="none"/></svg>
 <div class="sb" style="left:1103.300px;width:71.700px">OTRACK</div>
 <div class="sb" style="left:1192px;width:72px;background:none">ORTHO</div>
 <div class="sb" style="left:1282px;width:62.200px">POLAR</div>
 <svg class="abs" style="left:1351.500px;top:76px" width="12" height="8" viewBox="0 0 12 8"><path d="M1 6.800L6 1.800L11 6.800" stroke="#e4e6ea" stroke-width="1.800" fill="none"/></svg>
 <div class="abs" style="left:1395px;top:68.300px;width:5px;height:5px;border-radius:3px;background:#fff"></div>
 <div class="abs" style="left:1395px;top:76.100px;width:5px;height:5px;border-radius:3px;background:#fff"></div>
 <div class="abs" style="left:1395px;top:83.900px;width:5px;height:5px;border-radius:3px;background:#fff"></div>
</div>

</body></html>
